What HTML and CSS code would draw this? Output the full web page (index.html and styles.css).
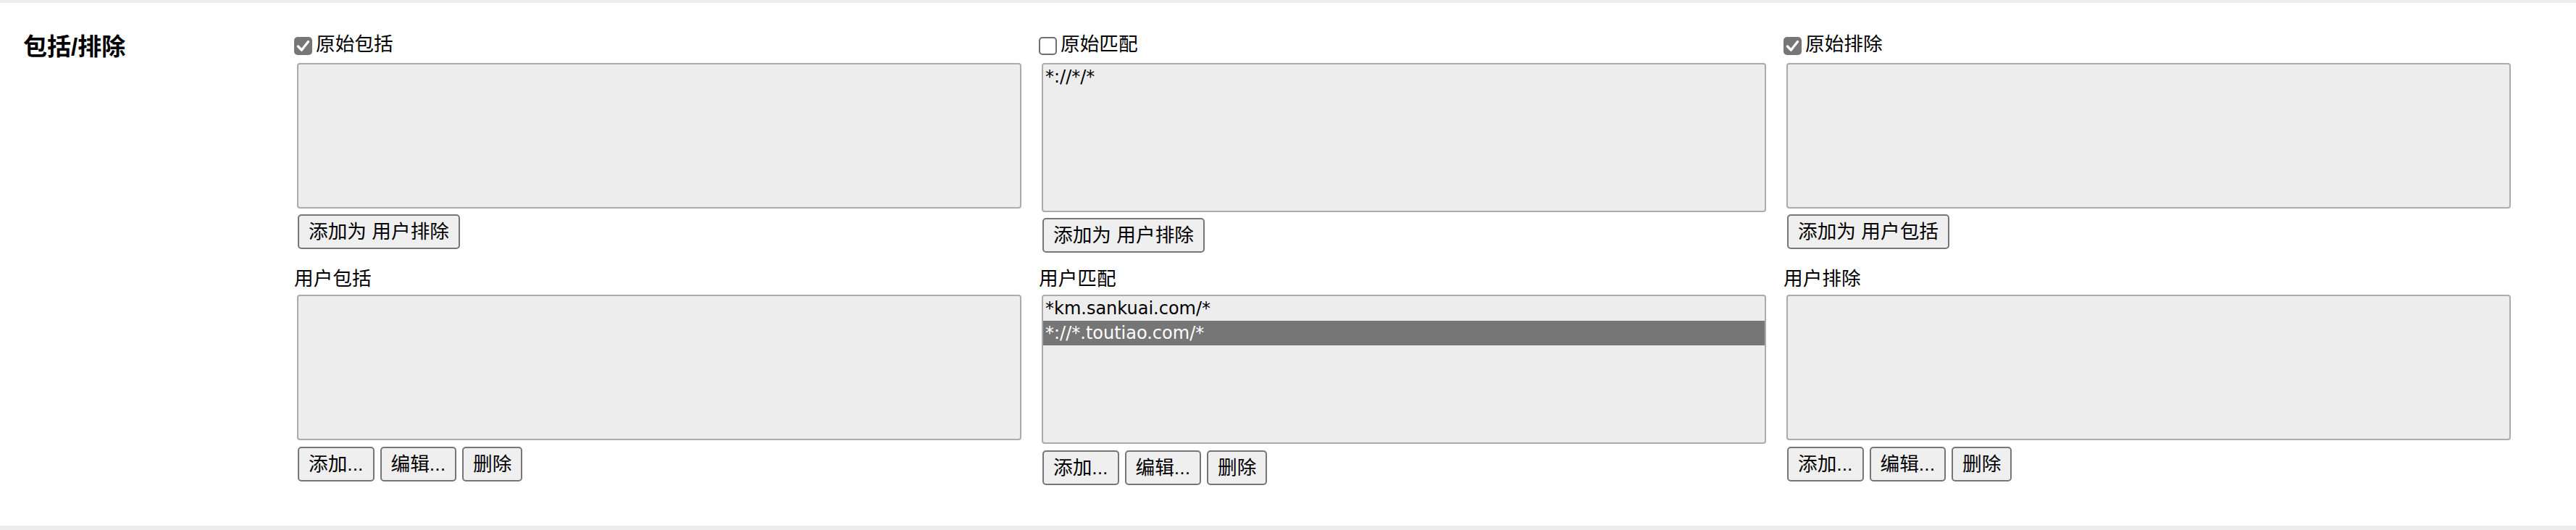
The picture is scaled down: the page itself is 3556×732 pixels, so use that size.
FILE: index.html
```html
<!DOCTYPE html>
<html lang="zh-CN">
<head>
<meta charset="utf-8">
<title>包括/排除</title>
<link rel="stylesheet" href="styles.css">
</head>
<body>
<div class="bar"></div>
<section class="section">
  <h2 class="title">包括/排除</h2>
  <div class="grid">
    <div class="cell">
      <label class="chk-row"><span class="chk is-checked"><svg viewBox="0 0 25 25" width="25" height="25"><path d="M5.5 13l4.8 5.2L19.5 6.5" fill="none" stroke="#fff" stroke-width="3.4" stroke-linecap="round" stroke-linejoin="round"/></svg></span>原始包括</label>
      <div class="box"></div>
      <div class="btns"><button class="btn">添加为 用户排除</button></div>
    </div>
    <div class="cell">
      <label class="chk-row"><span class="chk"></span>原始匹配</label>
      <div class="box box-tall">
        <div class="opt">*://*/*</div>
      </div>
      <div class="btns"><button class="btn">添加为 用户排除</button></div>
    </div>
    <div class="cell">
      <label class="chk-row"><span class="chk is-checked"><svg viewBox="0 0 25 25" width="25" height="25"><path d="M5.5 13l4.8 5.2L19.5 6.5" fill="none" stroke="#fff" stroke-width="3.4" stroke-linecap="round" stroke-linejoin="round"/></svg></span>原始排除</label>
      <div class="box"></div>
      <div class="btns"><button class="btn">添加为 用户包括</button></div>
    </div>

    <div class="cell">
      <div class="label">用户包括</div>
      <div class="box"></div>
      <div class="btns btns-low"><button class="btn">添加...</button><button class="btn">编辑...</button><button class="btn">删除</button></div>
    </div>
    <div class="cell">
      <div class="label">用户匹配</div>
      <div class="box box-tall">
        <div class="opt">*km.sankuai.com/*</div>
        <div class="opt is-selected">*://*.toutiao.com/*</div>
      </div>
      <div class="btns btns-low"><button class="btn">添加...</button><button class="btn">编辑...</button><button class="btn">删除</button></div>
    </div>
    <div class="cell">
      <div class="label">用户排除</div>
      <div class="box"></div>
      <div class="btns btns-low"><button class="btn">添加...</button><button class="btn">编辑...</button><button class="btn">删除</button></div>
    </div>
  </div>
</section>
<div class="bar bar-bottom"></div>
</body>
</html>
```
FILE: styles.css
```css
* { box-sizing: border-box; }

html, body {
  margin: 0;
  padding: 0;
  background: #fff;
}

body {
  height: 732px;
  display: flex;
  flex-direction: column;
  font-family: "Liberation Sans", "Noto Sans CJK SC", sans-serif;
  font-size: 26.67px;
  color: #000;
}

.bar {
  height: 4px;
  background: #ededed;
  flex: 0 0 auto;
}

.bar-bottom {
  height: 6px;
}

.section {
  flex: 1 1 auto;
  display: flex;
  align-items: flex-start;
  padding-top: 41px;
}

.title {
  flex: 0 0 406px;
  margin: 1px 0 0 0;
  padding-left: 32px;
  font-size: 33px;
  line-height: 38px;
  font-weight: 700;
  font-family: "Liberation Sans", "Noto Sans CJK SC", sans-serif;
}

.grid {
  display: grid;
  grid-template-columns: repeat(3, 1028px);
  row-gap: 20px;
  align-items: start;
  align-content: start;
}

.cell {
  display: flex;
  flex-direction: column;
  align-items: flex-start;
}

.chk-row {
  display: flex;
  align-items: flex-start;
  height: 32px;
  line-height: 32px;
}

.chk {
  width: 25px;
  height: 25px;
  margin: 6px 5px 0 0;
  border: 2px solid #6e6e6e;
  border-radius: 5px;
  background: #fff;
  display: flex;
  align-items: center;
  justify-content: center;
  overflow: hidden;
}

.chk.is-checked {
  border: none;
  background: #767676;
}

.chk svg {
  display: block;
}

.label {
  height: 32px;
  line-height: 32px;
}

.box {
  width: 1000px;
  height: 201px;
  margin: 10px 0 0 4px;
  border: 2px solid #ababab;
  border-radius: 4px;
  background: #ededed;
  overflow: hidden;
}

.label + .box {
  margin-top: 6px;
}

.box-tall {
  height: 206px;
}

.opt {
  height: 34px;
  line-height: 34px;
  padding-left: 3px;
  font-family: "DejaVu Sans", sans-serif;
  font-size: 24px;
  white-space: nowrap;
}

.opt.is-selected {
  background: #767676;
  color: #fff;
}

.btns {
  display: flex;
  gap: 8px;
  margin: 8px 0 0 5px;
}

.btns-low {
  margin-top: 9px;
}

.btn {
  height: 48px;
  padding: 0 13px;
  border: 2px solid #767676;
  border-radius: 5px;
  background: #efefef;
  color: #000;
  font-family: "Liberation Sans", "Noto Sans CJK SC", sans-serif;
  font-size: 26.67px;
  line-height: 1;
  display: inline-flex;
  align-items: center;
  white-space: nowrap;
}
```
